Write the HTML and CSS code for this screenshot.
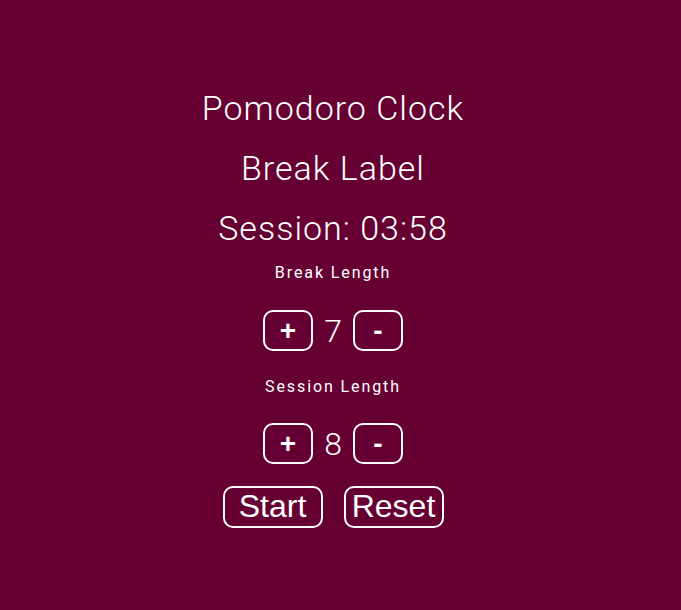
FILE: index.html
```html
<!DOCTYPE html>
<html>
<head>
<meta charset="utf-8">
<link rel="stylesheet" href="styles.css">
</head>
<body>
<main class="app">
  <h1 class="title">Pomodoro Clock</h1>
  <div class="label-big">Break Label</div>
  <div class="label-big">Session: 03:58</div>
  <div class="small">Break Length</div>
  <div class="row">
    <button class="pm">+</button>
    <span class="num">7</span>
    <button class="pm">-</button>
  </div>
  <div class="small small-2">Session Length</div>
  <div class="row row-2">
    <button class="pm">+</button>
    <span class="num">8</span>
    <button class="pm">-</button>
  </div>
  <div class="controls">
    <button class="ctl">Start</button>
    <button class="ctl">Reset</button>
  </div>
</main>
</body>
</html>
```
FILE: styles.css
```css
html, body {
  margin: 0;
  height: 100%;
  background: #660033;
}
body {
  padding: 0 8px;
  font-family: Roboto, "Liberation Sans", sans-serif;
  color: #fff;
}
.app {
  width: 650px;
  display: flex;
  flex-direction: column;
  align-items: center;
  padding-top: 78px;
}
.title, .label-big {
  margin: 0;
  font-size: 34px;
  font-weight: 300;
  letter-spacing: 1px;
  line-height: 60px;
}
.small {
  font-size: 16px;
  font-weight: 400;
  letter-spacing: 1.9px;
  line-height: 20px;
  margin-top: 5px;
}
.small-2 {
  margin-top: 26px;
}
.row {
  display: flex;
  align-items: center;
  gap: 10px;
  margin-top: 27px;
}
.row-2 {
  margin-top: 26px;
}
.pm {
  width: 50px;
  height: 41px;
  border: 2px solid #fff;
  border-radius: 10px;
  background: transparent;
  color: #fff;
  font-family: "Liberation Sans", Arial, sans-serif;
  font-weight: 700;
  font-size: 28px;
  line-height: 1;
  padding: 0;
}
.num {
  font-size: 32px;
  font-weight: 300;
  min-width: 20px;
  text-align: center;
}
.controls {
  display: flex;
  gap: 21px;
  margin-top: 22px;
}
.ctl {
  width: 100px;
  height: 42px;
  border: 2px solid #fff;
  border-radius: 10px;
  background: transparent;
  color: #fff;
  font-family: "Liberation Sans", Arial, sans-serif;
  font-size: 32px;
  padding: 0 0 3px;
  line-height: 1;
}
```
